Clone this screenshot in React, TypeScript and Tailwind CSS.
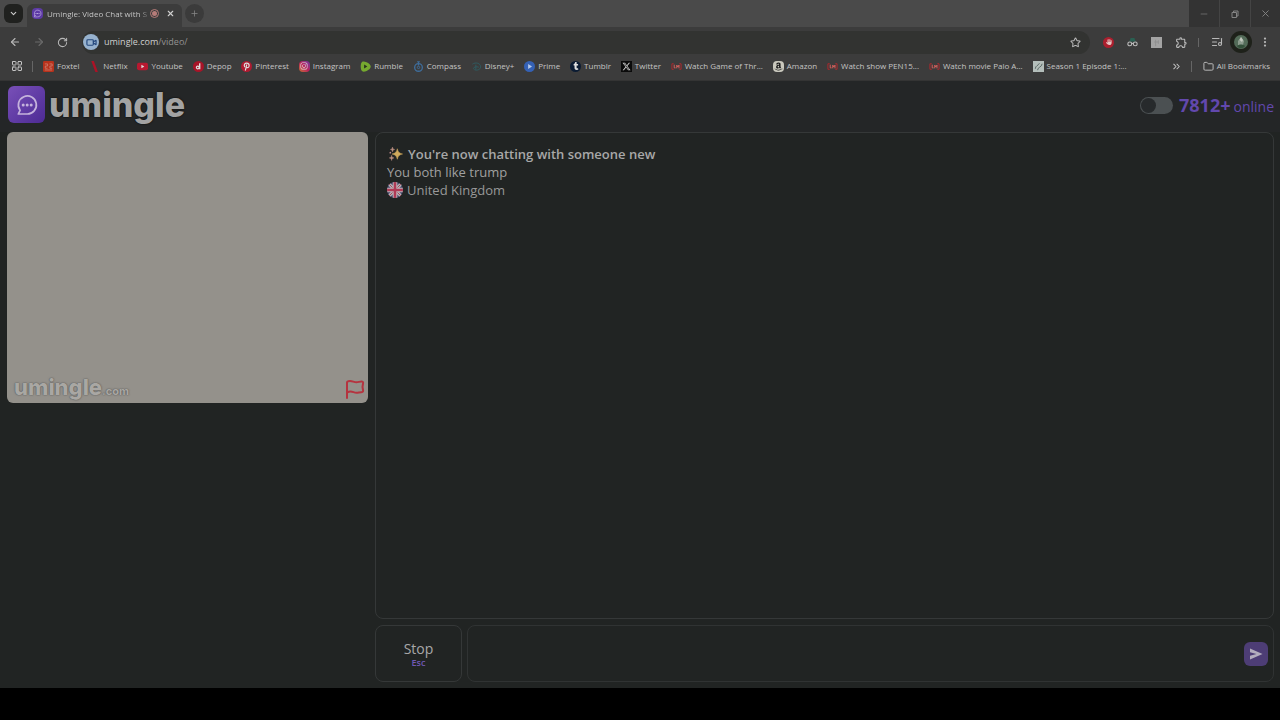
import React from 'react';
import { ArrowLeft, ArrowRight, ChevronDown, ChevronsRight, Folder, LayoutGrid, ListMusic, MoreVertical, Plus, RotateCw, Star, Video, X, Minus } from 'lucide-react';
import { FaAmazon, FaInstagram, FaTumblr, FaXTwitter, FaHand } from 'react-icons/fa6';
import { MdOutlineExtension } from 'react-icons/md';

function ChatBubble({ className }: { className: string }) {
  return (
    <svg viewBox="0 0 24 24" fill="none" stroke="currentColor" strokeWidth="1.7" strokeLinecap="round" strokeLinejoin="round" className={className} aria-hidden="true">
      <path d="M5 17.2A9 9 0 1 1 12 21H3.3l1.8-3.7Z" />
      <g fill="currentColor" stroke="none">
        <circle cx="8.2" cy="12" r="1.5" />
        <circle cx="12.2" cy="12" r="1.5" />
        <circle cx="16.2" cy="12" r="1.5" />
      </g>
    </svg>
  );
}

const icon = 'size-[11px] shrink-0';

const foxtel = (
  <svg viewBox="0 0 12 12" className={icon}>
    <rect width="12" height="12" rx="1.5" fill="#b8321c" />
    <path d="M2 3.2h3v2.3H2.5v2.4H5M7 3.2h3v2.3H7.5v2.4H10M2 9.8h8" fill="none" stroke="#cf8878" strokeWidth=".8" />
  </svg>
);
const netflix = (
  <svg viewBox="0 0 12 12" className={icon}>
    <path d="M2.5 0h2.8l4.4 12H6.9Z" fill="#ac1226" />
  </svg>
);
const youtube = (
  <svg viewBox="0 0 12 12" className={icon}>
    <rect y="2" width="12" height="8" rx="2" fill="#b81830" />
    <path d="m4.8 4.2 3.2 1.8-3.2 1.8Z" fill="#ddd" />
  </svg>
);
const depop = (
  <svg viewBox="0 0 12 12" className={icon}>
    <circle cx="6" cy="6" r="6" fill="#a81428" />
    <circle cx="5.2" cy="7" r="1.5" fill="none" stroke="#ddd" strokeWidth="1.3" />
    <path d="M7.3 2.5v6.5" stroke="#ddd" strokeWidth="1.5" />
  </svg>
);
const pinterest = (
  <span className="flex size-[11px] shrink-0 items-center justify-center rounded-full bg-[#ae1b31]">
    <svg viewBox="0 0 12 12" className="size-[11px]" fill="none" stroke="#ddd" strokeWidth="1.3" strokeLinecap="round">
      <path d="M4 6.2C2.8 3.8 4.3 2.3 6.2 2.3c3.600 0 3.300 5 .8 5-.8 0-1.200-.5-1.300-.8M6.200 4.300 4.800 10" />
    </svg>
  </span>
);
const instagram = (
  <span className="flex size-[11px] shrink-0 items-center justify-center rounded-sm bg-linear-to-tr from-[#c56a2a] via-[#ba1c5b] to-[#6c2ca4]">
    <FaInstagram className="size-2 text-[#ddd]" />
  </span>
);
const rumble = (
  <svg viewBox="0 0 12 12" className={icon}>
    <path d="M2.500.8C4 0 8 1 10.500 3.500c1.700 1.700 1.500 3.700 0 5.200C8 11 4.300 12.200 2.500 11.300.2 10.200.2 2 2.500.8Z" fill="#76a92f" />
    <path d="M4.500 3.800 8 6 4.500 8.300Z" fill="#26321d" />
  </svg>
);
const compass = (
  <svg viewBox="0 0 12 12" className={icon} fill="none" stroke="#3e6c9a">
    <circle cx="6" cy="7" r="4.2" strokeWidth="1.5" />
    <circle cx="6" cy="7" r="1.3" />
    <path d="M4.500.8h3M6 1v4" strokeWidth="1.3" />
  </svg>
);
const disney = (
  <svg viewBox="0 0 12 12" className={icon} fill="none" stroke="#2e5d63">
    <path d="M1.500 3.500C5 .8 10.500 2.500 10.500 6.300c0 3.700-5.700 4.700-7.500 2.500-1.300-1.800 2.500-3.300 5.500-2M5.300 4v5.500" />
  </svg>
);
const prime = (
  <svg viewBox="0 0 12 12" className={icon}>
    <circle cx="6" cy="6" r="6" fill="#3461b5" />
    <path d="m4.500 3.200 4.300 2.800-4.300 2.800Z" fill="#b5c9e8" />
  </svg>
);
const tumblr = (
  <span className="flex size-[11px] shrink-0 items-center justify-center rounded-full bg-[#0c1c33]">
    <FaTumblr className="size-2 text-[#ddd]" />
  </span>
);
const twitter = (
  <span className="flex size-[11px] shrink-0 items-center justify-center bg-[#0b0b0b]">
    <FaXTwitter className="size-[9px] text-[#ccc]" />
  </span>
);
const lookmovie = (
  <svg viewBox="0 0 12 12" className={icon} fill="none">
    <path d="M3 3H1v6h2M9 3h2v6H9" stroke="#b5272d" />
    <path d="M3.500 4v3.500H5M6.300 8V4.500l1.200 2 1.200-2V8" stroke="#e2625e" />
  </svg>
);
const amazon = (
  <span className="flex size-[11px] shrink-0 items-center justify-center rounded-sm bg-[#c9c8bd]">
    <FaAmazon className="size-[9px] text-[#1c1c1c]" />
  </span>
);
const season = (
  <svg viewBox="0 0 12 12" className={icon}>
    <rect width="12" height="12" fill="#b4bebb" />
    <path d="M2.500 8.500C2.500 5 6 5 7 2.500M5 10c0-3.500 4.500-3 5-7" stroke="#52615e" fill="none" />
  </svg>
);

const bookmarks: [string, React.ReactNode][] = [
  ['Foxtel', foxtel],
  ['Netflix', netflix],
  ['Youtube', youtube],
  ['Depop', depop],
  ['Pinterest', pinterest],
  ['Instagram', instagram],
  ['Rumble', rumble],
  ['Compass', compass],
  ['Disney+', disney],
  ['Prime', prime],
  ['Tumblr', tumblr],
  ['Twitter', twitter],
  ['Watch Game of Thr...', lookmovie],
  ['Amazon', amazon],
  ['Watch show PEN15...', lookmovie],
  ['Watch movie Palo A...', lookmovie],
  ['Season 1 Episode 1:...', season],
];

function TabStrip() {
  return (
    <div className="flex h-[27px] items-stretch bg-[#4a4a4a]">
      <div className="flex flex-1 items-center">
        <button aria-label="Search tabs" className="ml-1 flex size-[19px] items-center justify-center rounded-md bg-[#20211f] text-[#ccc]">
          <ChevronDown className="size-[9px]" strokeWidth={3} />
        </button>
        <div className="ml-1 mt-1 flex h-[23px] w-[155px] items-center self-stretch rounded-t-md bg-[#3c3c3c] pb-1 pl-[5px]">
          <span className="flex size-[11px] shrink-0 items-center justify-center rounded-sm bg-[#5d3aa5] text-[#c9b8e8]">
            <ChatBubble className="size-[9px]" />
          </span>
          <span className="ml-1 w-[103px] shrink-0 whitespace-nowrap bg-linear-to-r from-[#d0d0d0] from-90% to-[#4a4a4a] bg-clip-text text-[8px] text-transparent">
            Umingle: Video Chat with S
          </span>
          <span className="flex size-[9px] shrink-0 items-center justify-center rounded-full border border-[#b77c79]">
            <span className="size-[5px] rounded-full bg-[#b77c79]" />
          </span>
          <button aria-label="Close tab" className="ml-[7px] text-[#d0d0d0]">
            <X className="size-[9px]" strokeWidth={3} />
          </button>
        </div>
        <button aria-label="New tab" className="ml-[3px] flex size-[19px] items-center justify-center rounded-full bg-[#3b3b3b] text-[#888]">
          <Plus className="size-[9px]" />
        </button>
      </div>
      <div className="flex gap-px bg-[#444] text-[#858585]">
        <button aria-label="Minimize" className="flex w-[30px] items-center justify-center bg-[#333]"><Minus className="size-[10px]" strokeWidth={1.5} /></button>
        <button aria-label="Restore" className="flex w-[30px] items-center justify-center bg-[#333]">
          <svg viewBox="0 0 8 8" className="size-2" fill="none" stroke="currentColor">
            <path d="M1 2.500h4.500v5H1ZM2.500 2.500V1H7v5H5.500" />
          </svg>
        </button>
        <button aria-label="Close" className="flex w-[29px] items-center justify-center bg-[#333]"><X className="size-[11px]" strokeWidth={2} /></button>
      </div>
    </div>
  );
}

function Toolbar() {
  return (
    <div className="flex h-[30px] items-center bg-[#3c3c3c] px-[9px] text-[#b8b8b8]">
      <div className="flex w-[73px] items-center gap-3">
        <button aria-label="Back"><ArrowLeft className="size-3" strokeWidth={2.2} /></button>
        <button aria-label="Forward" className="text-[#6a6a6a]"><ArrowRight className="size-3" strokeWidth={2.2} /></button>
        <button aria-label="Reload"><RotateCw className="size-[11px]" strokeWidth={2.2} /></button>
      </div>
      <div className="flex h-[23px] flex-1 items-center rounded-full bg-[#323331] pr-[9px]">
        <span className="ml-px flex size-4 items-center justify-center rounded-full bg-[#97b2ce] text-[#24477c]">
          <Video className="size-[11px]" strokeWidth={2.5} />
        </span>
        <a href="#" className="ml-[5px] flex-1 text-[9px] text-[#929292]">
          <span className="text-[#cfcfcf]">umingle.com</span>/video/
        </a>
        <button aria-label="Bookmark this page"><Star className="size-[11px]" strokeWidth={2.2} /></button>
      </div>
      <div className="ml-[13px] flex items-center gap-[13px]">
        <span className="flex size-[11px] items-center justify-center rounded-full bg-[#ac1f2e] text-[#e6c6c4]"><FaHand className="size-[6px]" /></span>
        <svg viewBox="0 0 12 12" className="size-[11px]">
          <path d="M2.500 5 4 1h4l1.500 4Z" fill="#2a6052" />
          <g fill="none" stroke="#bcbcbc" strokeWidth="1.2">
            <circle cx="3" cy="7.5" r="2.1" /><circle cx="9" cy="7.5" r="2.1" /><path d="M5 7h2" />
          </g>
        </svg>
        <svg viewBox="0 0 12 12" className="size-[11px]">
          <rect width="12" height="12" fill="#a4a4a4" />
          <path d="M5 3v7M8 3.500v4M3.500 5.500h5" stroke="#909090" />
        </svg>
        <button aria-label="Extensions"><MdOutlineExtension className="size-[13px]" /></button>
      </div>
      <span className="ml-[10px] h-[9px] w-px bg-[#666]" />
      <button aria-label="Media controls" className="ml-3"><ListMusic className="size-3" strokeWidth={2.2} /></button>
      <span className="ml-[7px] flex size-[22px] items-center justify-center rounded-full bg-[#1e211a]">
        <svg viewBox="0 0 14 14" className="size-[14px]">
          <circle cx="7" cy="7" r="7" fill="#536b58" />
          <path d="M4 11V6l3-4 3 4-1 4Z" fill="#8b9b8d" />
          <path d="m5.500 5 1.500-3 2 3-1 2Z" fill="#c4cac0" />
          <path d="M3 11c2-2 6-2 8 0-2 3-6 3-8 0Z" fill="#33503a" />
        </svg>
      </span>
      <button aria-label="Menu" className="ml-[7px]"><MoreVertical className="size-3" strokeWidth={2.5} /></button>
    </div>
  );
}

function BookmarkBar() {
  return (
    <nav className="flex h-6 items-center border-b border-[#343434] bg-[#3c3c3c] pb-[5px] pl-[11px] pr-[10px] text-[8px] text-[#c4c4c4]">
      <LayoutGrid className="size-3 shrink-0" strokeWidth={2} />
      <span className="ml-[9px] h-[11px] w-px bg-[#666]" />
      <div className="ml-[10px] flex flex-1 items-center justify-between">
        {bookmarks.map(([name, glyph]) => (
          <a key={name} href="#" className="flex items-center gap-[3px] whitespace-nowrap">{glyph}{name}</a>
        ))}
      </div>
      <button aria-label="More bookmarks" className="ml-11"><ChevronsRight className="size-[11px]" strokeWidth={2.2} /></button>
      <span className="ml-[9px] h-[11px] w-px bg-[#666]" />
      <a href="#" className="ml-[11px] flex items-center gap-[3px] whitespace-nowrap"><Folder className="size-[11px]" strokeWidth={2} />All Bookmarks</a>
    </nav>
  );
}

function Sparkles() {
  return (
    <svg viewBox="0 0 16 16" className="size-[14px] shrink-0" aria-hidden="true">
      <path d="M9.500 2c.9 3.800 1.900 5 6 6-4.100 1-5.100 2.200-6 6-.9-3.800-1.900-5-6-6 4.100-1 5.100-2.200 6-6Z" fill="#cfa95c" stroke="#cfa95c" strokeWidth=".6" />
      <path d="M4 0c.4 2 .8 2.400 2.500 2.800C4.800 3.200 4.400 3.600 4 5.600 3.600 3.600 3.200 3.200 1.500 2.800 3.200 2.400 3.600 2 4 0Z" fill="#b98f80" stroke="#b98f80" strokeWidth=".5" />
      <path d="M3 9.500c.4 2.200.9 2.600 2.700 3-1.800.4-2.300.8-2.700 3-.4-2.200-.9-2.600-2.700-3 1.800-.4 2.300-.8 2.700-3Z" fill="#b98f80" stroke="#b98f80" strokeWidth=".5" />
      <circle cx="1.500" cy="6.500" r="1" fill="#b9858a" />
    </svg>
  );
}

function UkFlag() {
  return (
    <svg viewBox="0 0 16 16" className="size-4 shrink-0" aria-hidden="true">
      <clipPath id="round-flag"><circle cx="8" cy="8" r="8" /></clipPath>
      <g clipPath="url(#round-flag)">
        <path d="M0 0h16v16H0Z" fill="#474a6c" />
        <path d="m1 1 14 14M15 1 1 15" stroke="#b5b0b4" strokeWidth="3.2" />
        <path d="m1 1 14 14M15 1 1 15" stroke="#a13c52" strokeWidth=".9" />
        <path d="M8 0v16M0 8h16" stroke="#beb4b8" strokeWidth="4.6" />
        <path d="M8 0v16M0 8h16" stroke="#b03a55" strokeWidth="2.6" />
      </g>
    </svg>
  );
}

function Header() {
  return (
    <header className="flex h-[51px] items-center justify-between bg-[#242627] pl-2 pr-[6px] pb-[2px]">
      <a href="#" className="flex items-center gap-1 pb-[2px]">
        <span className="flex size-[37px] items-center justify-center rounded-md bg-linear-to-br from-[#7950b8] to-[#4d2a94] text-[#c5b3dc]">
          <ChatBubble className="size-6" />
        </span>
        <span className="font-['Inter'] text-[34px] leading-9 font-extrabold text-[#a3a3a3] [text-shadow:0_0_2px_#000]">umingle</span>
      </a>
      <div className="flex items-center text-[#6248ad]">
        <label className="flex">
          <input type="checkbox" role="switch" aria-label="Theme" className="peer sr-only" />
          <span className="flex h-[17px] w-[33px] rounded-full bg-[#4b5052] p-px">
            <span className="size-[15px] rounded-full bg-[#272a2c]" />
          </span>
        </label>
        <p className="ml-[6px] flex items-baseline gap-[3px] leading-6">
          <strong className="text-[18px] font-bold">7812+</strong>
          <span className="text-[14px]">online</span>
        </p>
      </div>
    </header>
  );
}

export default function App() {
  return (
    <div className="flex min-h-screen flex-col bg-black font-['Open_Sans','Noto_Sans',sans-serif]">
      <TabStrip />
      <Toolbar />
      <BookmarkBar />
      <div className="mb-8 flex flex-1 flex-col bg-[#212423]">
        <Header />
        <main className="flex flex-1 gap-[7px] pb-[6px] pl-[7px] pr-[6px]">
          <section aria-label="Video" className="w-[361px] shrink-0">
            <div className="flex aspect-[4/3] items-end justify-between rounded-md bg-[#94918b] pb-1 pl-[7px] pr-[3px]">
              <p className="flex items-baseline font-['Inter'] font-extrabold text-[#a9a7a3] [text-shadow:0_0_1px_#555,0_0_2px_#666]">
                <span className="text-[22px] leading-4">umingle</span>
                <span className="text-[11px] leading-4 font-bold">.com</span>
              </p>
              <button aria-label="Report" className="text-[#b5333f]">
                <svg viewBox="0 0 20 20" className="size-5" fill="none" stroke="currentColor" strokeWidth="2" strokeLinecap="round" strokeLinejoin="round">
                  <path d="M2 19V3.500C2 2.500 3 2 5 2c2.500 0 4 1.300 6.500 1.300 2 0 3-.8 5-.8 1.200 0 1.800.5 1.600 1.600L17.500 8l.6 3.500c.1 1-.6 1.700-1.900 1.700-2 0-2.700.6-4.700.6C9 13.800 8 12.500 5.500 12.500c-1.500 0-2.500.5-3.500 1" />
                </svg>
              </button>
            </div>
          </section>
          <section aria-label="Chat" className="flex flex-1 flex-col gap-[6px]">
            <div className="flex-1 rounded-lg border border-[#353838] px-[11px] py-3 text-[13px] leading-[18px] text-[#989898]">
              <p className="flex items-center gap-[5px] pl-[2px] font-semibold text-[#a8a8a8]"><Sparkles />You're now chatting with someone new</p>
              <p className="text-[#a0a0a0]">You both like trump</p>
              <p className="flex items-center gap-1"><UkFlag />United Kingdom</p>
            </div>
            <div className="flex h-[57px] gap-[5px]">
              <button className="flex w-[87px] flex-col items-center justify-center rounded-lg border border-[#353838] pt-[2px] text-[14px] leading-4 text-[#a8a8a8]">
                Stop
                <span className="text-[9px] leading-3 font-semibold text-[#7058b4]">Esc</span>
              </button>
              <form className="flex flex-1 items-center rounded-lg border border-[#303333] pr-[5px]" onSubmit={(e) => e.preventDefault()}>
                <input aria-label="Message" className="h-full min-w-0 flex-1 bg-transparent px-3 text-sm text-[#a8a8a8] outline-none" />
                <button aria-label="Send" className="flex size-6 items-center justify-center rounded-md bg-[#4d3d75] text-[#b3adbd]">
                  <svg viewBox="0 0 14 14" className="size-[14px]" fill="currentColor"><path d="M1 1.500 13.500 7 1 12.500V8.800L7.500 7 1 5.200Z" /></svg>
                </button>
              </form>
            </div>
          </section>
        </main>
      </div>
    </div>
  );
}
